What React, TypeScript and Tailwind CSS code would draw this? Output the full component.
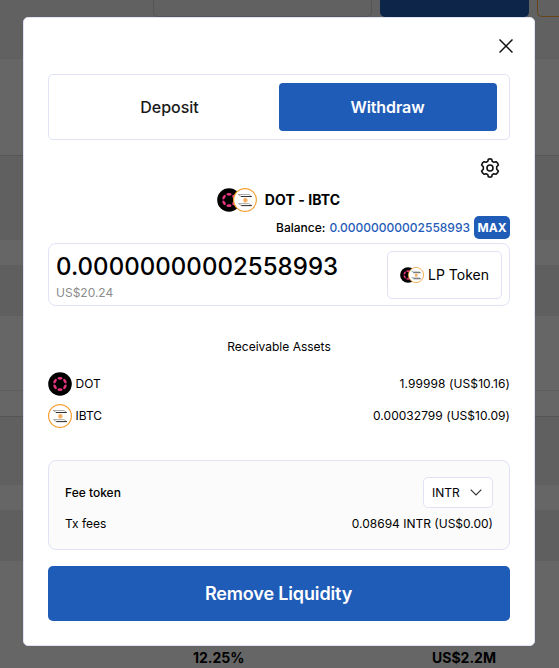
import React from "react";

function DotCoin({ className }: { className: string }) {
  return (
    <svg viewBox="0 0 24 24" className={className}>
      <circle cx="12" cy="12" r="11.8" fill="#000" />
      <g fill="#e8337f">
        {[0, 60, 120, 180, 240, 300].map((a) => (
          <ellipse key={a} cx="12" cy="6.3" rx="2.6" ry="1.35" transform={`rotate(${a} 12 12)`} />
        ))}
      </g>
    </svg>
  );
}

function IbtcCoin({ className }: { className: string }) {
  return (
    <svg viewBox="0 0 24 24" className={className}>
      <circle cx="12" cy="12" r="11.4" fill="#fff" stroke="#f5a033" strokeWidth="1.2" />
      <g fill="none" stroke="#555" strokeWidth="0.5" strokeLinejoin="round">
        <path d="M5.3 6.5H16l2.6 2H8z" />
        <path d="M5.6 15.6h10.2l3 2H8.3z" />
      </g>
      <path d="M8 8.5h10.6M8.3 17.6h10.5" stroke="#111" strokeWidth="0.8" />
      <circle cx="12.4" cy="12.2" r="2.5" fill="#fbd3a2" />
      <path d="M11.6 10.7h1.2q1.1.6 0 1.4h-1.2zM11.6 12.1h1.4q1.1.8 0 1.5h-1.4z" fill="none" stroke="#f09a36" strokeWidth=".7" />
    </svg>
  );
}

function Backdrop() {
  return (
    <div className="flex h-full flex-col bg-[#666666]">
      <div className="flex h-[59px] shrink-0 items-start justify-end border-b border-[#5d5d5d] bg-[#616161]">
        <div className="h-[17px] w-[219px] rounded-b-[5px] border border-t-0 border-[#555555]" />
        <div className="ml-2 h-[17px] w-[149px] rounded-b-[5px] bg-[#0c2548]" />
        <div className="ml-2 h-[17px] w-[22px] rounded-bl-[5px] border-b border-l border-[#68441a]" />
      </div>
      <div className="h-[97px] shrink-0 border-b border-[#565656]" />
      <div className="h-[84px] shrink-0 bg-[#606060]" />
      <div className="h-[25px] shrink-0" />
      <div className="h-[51px] shrink-0 bg-[#5f5f5f]" />
      <div className="h-[75px] shrink-0 border-b border-[#5e5e5e]" />
      <div className="h-[26px] shrink-0 border-b border-[#555555]" />
      <div className="h-[68px] shrink-0 bg-[#606060]" />
      <div className="h-[25px] shrink-0" />
      <div className="h-[51px] shrink-0 bg-[#5f5f5f]" />
      <div className="flex flex-1 items-end text-[14px] leading-5 font-bold text-black">
        <span className="ml-[193px] w-[239px]">12.25%</span>
        <span>US$2.2M</span>
      </div>
    </div>
  );
}

export default function App() {
  return (
    <div className="relative h-[668px] w-[559px] overflow-hidden font-['Inter','Liberation_Sans',sans-serif] whitespace-nowrap text-black">
      <Backdrop />
      <div
        role="dialog"
        className="absolute top-[17px] left-[23px] flex h-[629px] w-[512px] flex-col rounded-[5px] border border-[#dfe3f5] bg-white px-6"
      >
        <div className="flex h-14 shrink-0 items-center justify-end">
          <button aria-label="Close" className="-mr-[3px]">
            <svg viewBox="0 0 14 14" className="size-[14px]" fill="none" stroke="#111" strokeWidth="1.5">
              <path d="M.5.5l13 13M13.5.5l-13 13" />
            </svg>
          </button>
        </div>

        <div className="flex h-[66px] shrink-0 rounded-[5px] border border-[#dfe3f5] px-3 py-2 text-base font-medium">
          <button className="flex-1 pr-px text-[#1a1a1a]">Deposit</button>
          <button className="flex-1 rounded-[4px] bg-[#1f5cb8] pr-px font-semibold tracking-[-0.005em] text-white">Withdraw</button>
        </div>

        <div className="flex h-12 shrink-0 items-center justify-end pt-2 pr-[10px]">
          <button aria-label="Settings">
            <svg viewBox="0 0 20 20" className="size-5" fill="none" stroke="#111" strokeWidth="1.6" strokeLinejoin="round">
              <path d="M8.3 1.2Q10 .6 11.7 1.2L12.2 3.4 13.8 4.3 16 3.7Q17.8 4.9 18.4 7L16.7 8.8V11.2L18.4 13Q17.8 15.1 16 16.3L13.8 15.7 12.2 16.6 11.7 18.8Q10 19.4 8.3 18.8L7.8 16.6 6.2 15.7 4 16.3Q2.2 15.1 1.6 13L3.3 11.2V8.8L1.6 7Q2.2 4.9 4 3.7L6.2 4.3 7.8 3.4Z" />
              <circle cx="10" cy="10" r="3" />
            </svg>
          </button>
        </div>

        <div className="flex h-6 shrink-0 items-center justify-center pr-px">
          <DotCoin className="size-6" />
          <IbtcCoin className="-ml-2 size-6" />
          <span className="ml-2 text-[14px] leading-[22px] font-bold tracking-[0.005em]">DOT - IBTC</span>
        </div>

        <div className="mt-1 flex h-[23px] shrink-0 items-center justify-end gap-1 text-xs font-medium">
          <span>Balance:</span>
          <span className="text-[#1f5cb8]">0.00000000002558993</span>
          <button className="h-[23px] w-9 rounded-[5px] bg-[#1f5cb8] font-bold text-white">MAX</button>
        </div>

        <div className="mt-1 flex h-[63px] shrink-0 items-center justify-between rounded-lg border border-[#dfe3f5] pr-[7px] pl-[7px]">
          <div className="pt-1">
            <div className="text-2xl leading-8 font-medium tracking-[0.002em]">0.00000000002558993</div>
            <div className="text-xs leading-5 text-[#8c8c8c]">US$20.24</div>
          </div>
          <button className="flex h-12 w-[115px] items-center justify-center rounded-[5px] border border-[#dfe3f5] text-[14px]">
            <DotCoin className="size-4" />
            <IbtcCoin className="-ml-2 size-4" />
            <span className="ml-1">LP Token</span>
          </button>
        </div>

        <div className="mt-[31px] h-5 shrink-0 text-center text-xs leading-5">Receivable Assets</div>

        <div className="mt-[15px] flex shrink-0 flex-col gap-2 text-xs">
          <div className="flex h-6 items-center">
            <DotCoin className="size-6" />
            <span className="ml-[3.5px]">DOT</span>
            <span className="ml-auto tracking-[0.008em]">1.99998 (US$10.16)</span>
          </div>
          <div className="flex h-6 items-center">
            <IbtcCoin className="size-6" />
            <span className="ml-[3.5px]">IBTC</span>
            <span className="ml-auto tracking-[0.003em]">0.00032799 (US$10.09)</span>
          </div>
        </div>

        <div className="mt-8 h-[90px] shrink-0 rounded-lg border border-[#dfe3f5] bg-[#fbfbfb] px-4 pt-4 text-xs">
          <div className="flex h-[31px] items-center justify-between">
            <span className="font-medium">Fee token</span>
            <button className="flex h-[31px] w-[70px] items-center rounded-[5px] border border-[#dfe3f5] bg-white pl-2">
              <span>INTR</span>
              <svg viewBox="0 0 12 7" className="ml-auto mr-[10px] h-[7px] w-3" fill="none" stroke="#333" strokeWidth="1.2">
                <path d="M.7.7L6 6 11.3.7" />
              </svg>
            </button>
          </div>
          <div className="mt-[6px] flex h-5 items-center justify-between">
            <span>Tx fees</span>
            <span>0.08694 INTR (US$0.00)</span>
          </div>
        </div>

        <button className="mt-4 h-[55px] shrink-0 rounded-[5px] bg-[#1f5cb8] pr-px text-lg font-semibold tracking-[-0.008em] text-white">
          Remove Liquidity
        </button>
      </div>
    </div>
  );
}
